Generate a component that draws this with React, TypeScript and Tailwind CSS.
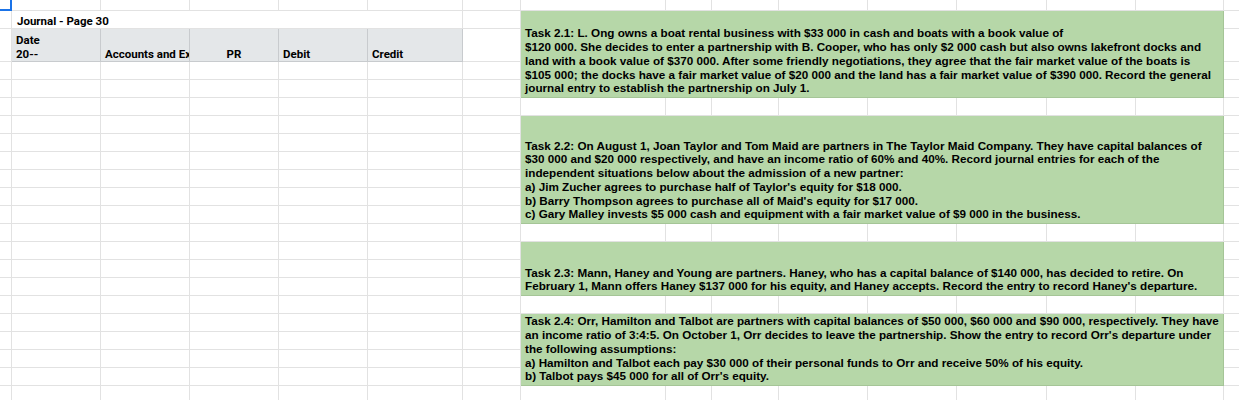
import React from 'react'

/**
 * A task note that is merged over several sheet cells.
 */
interface TaskNote {
  id: string
  placement: string
  rows: number
  lines: string[]
}

const GRID_COLUMNS = 16
const GRID_ROWS = 22

const taskNotes: TaskNote[] = [
  {
    id: 'task-2-1',
    placement: 'col-start-8 col-span-8 row-start-2 row-span-4',
    rows: 4,
    lines: [
      'Task 2.1: L. Ong owns a boat rental business with $33 000 in cash and boats with a book value of',
      '$120 000. She decides to enter a partnership with B. Cooper, who has only $2 000 cash but also owns lakefront docks and',
      'land with a book value of $370 000. After some friendly negotiations, they agree that the fair market value of the boats is',
      '$105 000; the docks have a fair market value of $20 000 and the land has a fair market value of $390 000. Record the general',
      'journal entry to establish the partnership on July 1.',
    ],
  },
  {
    id: 'task-2-2',
    placement: 'col-start-8 col-span-8 row-start-7 row-span-6',
    rows: 6,
    lines: [
      'Task 2.2: On August 1, Joan Taylor and Tom Maid are partners in The Taylor Maid Company. They have capital balances of',
      '$30 000 and $20 000 respectively, and have an income ratio of 60% and 40%. Record journal entries for each of the',
      'independent situations below about the admission of a new partner:',
      "a) Jim Zucher agrees to purchase half of Taylor's equity for $18 000.",
      "b) Barry Thompson agrees to purchase all of Maid's equity for $17 000.",
      'c) Gary Malley invests $5 000 cash and equipment with a fair market value of $9 000 in the business.',
    ],
  },
  {
    id: 'task-2-3',
    placement: 'col-start-8 col-span-8 row-start-14 row-span-3',
    rows: 3,
    lines: [
      'Task 2.3: Mann, Haney and Young are partners. Haney, who has a capital balance of $140 000, has decided to retire. On',
      "February 1, Mann offers Haney $137 000 for his equity, and Haney accepts. Record the entry to record Haney's departure.",
    ],
  },
  {
    id: 'task-2-4',
    placement: 'col-start-8 col-span-8 row-start-18 row-span-4',
    rows: 4,
    lines: [
      'Task 2.4: Orr, Hamilton and Talbot are partners with capital balances of $50 000, $60 000 and $90 000, respectively. They have',
      "an income ratio of 3:4:5. On October 1, Orr decides to leave the partnership. Show the entry to record Orr's departure under",
      'the following assumptions:',
      'a) Hamilton and Talbot each pay $30 000 of their personal funds to Orr and receive 50% of his equity.',
      "b) Talbot pays $45 000 for all of Orr's equity.",
    ],
  },
]

// Slots taken by explicitly placed cells: selection (1), title (5), header (5), notes (8 cols each)
const occupiedSlots = 1 + 5 + 5 + taskNotes.reduce((sum, note) => sum + 8 * note.rows, 0)

const plainCellCount = GRID_COLUMNS * GRID_ROWS - occupiedSlots

function HeaderCell({ placement, children, center }: { placement: string; children: React.ReactNode; center?: boolean }) {
  return (
    <div
      className={`${placement} row-start-3 bg-[#e4e7e9] border-r border-b border-[#c8cbce] overflow-hidden flex flex-col justify-end px-[4px] text-[11.5px] leading-[14px] font-bold text-black whitespace-nowrap ${
        center ? 'items-center' : ''
      }`}
    >
      {children}
    </div>
  )
}

function TaskCell({ note }: { note: TaskNote }) {
  return (
    <div
      className={`${note.placement} bg-[#b6d7a8] border-r border-b border-[#a5c597] flex flex-col justify-end pl-[4px] pb-[2px] overflow-hidden font-['Liberation_Sans',Arial,sans-serif] font-bold text-[11.7px] leading-[13.75px] text-black`}
    >
      {note.lines.map((line, i) => (
        <div key={i} className="whitespace-nowrap">
          {line}
        </div>
      ))}
    </div>
  )
}

export default function App() {
  return (
    <div className="w-[1239px] h-[400px] overflow-hidden bg-white font-['Roboto',Arial,sans-serif]">
      <div className="grid grid-cols-[12px_89px_89px_89px_89px_95px_58px_145px_46px_67px_89px_89px_90px_89px_88px_89px] grid-rows-[11px_18px_33px_repeat(19,18px)]">
        {/* active cell outline in the top-left corner */}
        <div className="col-start-1 row-start-1 border-r-2 border-b-2 border-[#1a73e8]" />

        <div className="col-start-2 col-span-5 row-start-2 border-r border-b border-[#e2e2e2] flex items-end pl-[5px] text-[11.5px] leading-[14px] font-bold text-black whitespace-nowrap">
          Journal - Page 30
        </div>

        <HeaderCell placement="col-start-2">
          <span>Date</span>
          <span>20--</span>
        </HeaderCell>
        <HeaderCell placement="col-start-3">Accounts and Explanation</HeaderCell>
        <HeaderCell placement="col-start-4" center>
          PR
        </HeaderCell>
        <HeaderCell placement="col-start-5">Debit</HeaderCell>
        <HeaderCell placement="col-start-6">Credit</HeaderCell>

        {taskNotes.map((note) => (
          <TaskCell key={note.id} note={note} />
        ))}

        {Array.from({ length: plainCellCount }).map((_, i) => (
          <div key={i} className="border-r border-b border-[#e2e2e2]" />
        ))}
      </div>
    </div>
  )
}
